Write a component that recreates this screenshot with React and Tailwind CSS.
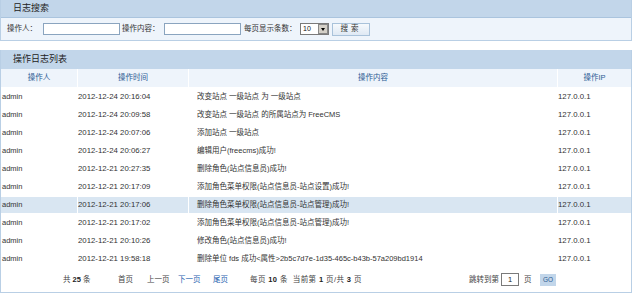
const font = { fontFamily: '"Liberation Sans", "Noto Sans CJK SC", sans-serif' };

const rows = [
  ["admin", "2012-12-24 20:16:04", "改变站点 一级站点 为 一级站点"],
  ["admin", "2012-12-24 20:09:58", "改变站点 一级站点 的所属站点为 FreeCMS"],
  ["admin", "2012-12-24 20:07:06", "添加站点 一级站点"],
  ["admin", "2012-12-24 20:06:27", "编辑用户(freecms)成功!"],
  ["admin", "2012-12-21 20:27:35", "删除角色(站点信息员)成功!"],
  ["admin", "2012-12-21 20:17:09", "添加角色菜单权限(站点信息员-站点设置)成功!"],
  ["admin", "2012-12-21 20:17:06", "删除角色菜单权限(站点信息员-站点管理)成功!"],
  ["admin", "2012-12-21 20:17:02", "添加角色菜单权限(站点信息员-站点管理)成功!"],
  ["admin", "2012-12-21 20:10:26", "修改角色(站点信息员)成功!"],
  ["admin", "2012-12-21 19:58:18", "删除单位 fds 成功<属性>2b5c7d7e-1d35-465c-b43b-57a209bd1914"],
];

const cols = "grid grid-cols-[76px_110px_368px_1fr] gap-x-px";

export default function App() {
  return (
    <div className="w-[633px] h-[296px] bg-white text-[7.5px] text-[#333] overflow-hidden" style={font}>
      {/* search panel */}
      <div className="w-[632px] border border-t-0 border-[#b9cfe5]">
        <div className="h-[18px] bg-[#c2d6ea] border-b border-[#aac4de] pl-[12px] flex items-center text-[9px] text-[#222]">
          日志搜索
        </div>
        <div className="h-[22px] bg-[#eef4fb] flex items-center pl-[6px]">
          <span className="w-[36px]">操作人：</span>
          <span className="w-[77px] h-[12px] bg-white border border-[#8aa4bf]" />
          <span className="ml-[2px] w-[42px]">操作内容：</span>
          <span className="w-[77px] h-[12px] bg-white border border-[#8aa4bf]" />
          <span className="ml-[3px] w-[56px]">每页显示条数：</span>
          <span className="w-[29px] h-[12px] bg-white border border-[#7a7a7a] flex items-center">
            <span className="flex-1 pl-[2px] text-[7px] text-[#111]">10</span>
            <span className="w-[10px] h-[10px] bg-[#d4d0c8] border border-[#888] flex items-center justify-center">
              <span className="w-0 h-0 border-l-[2px] border-r-[2px] border-t-[3px] border-l-transparent border-r-transparent border-t-black" />
            </span>
          </span>
          <span className="ml-[3px] w-[38px] h-[13px] border border-[#a9c2da] bg-gradient-to-b from-[#f6f9fc] to-[#dfe9f4] flex items-center justify-center text-[#333] tracking-[3px]">
            搜索
          </span>
        </div>
      </div>

      {/* list panel */}
      <div className="mt-[9px] w-[632px] border border-t-0 border-[#b9cfe5]">
        <div className="h-[19px] bg-[#c2d6ea] pl-[12px] flex items-center text-[9px] text-[#222]">
          操作日志列表
        </div>
        <div className={`${cols} h-[18px] text-[#2b5b93]`}>
          <div className="bg-[#eef4fb] flex items-center justify-center">操作人</div>
          <div className="bg-[#eef4fb] flex items-center justify-center">操作时间</div>
          <div className="bg-[#eef4fb] flex items-center justify-center">操作内容</div>
          <div className="bg-[#eef4fb] flex items-center justify-center">操作IP</div>
        </div>
        <div className="mt-[2px] flex flex-col gap-y-[2px]">
          {rows.map((r, i) => {
            const bg = i === 6 ? "bg-[#d9e6f2]" : "";
            return (
              <div key={i} className={`${cols} h-[16px]`}>
                <div className={`${bg} flex items-center pl-[1px]`}>{r[0]}</div>
                <div className={`${bg} flex items-center text-[7.8px]`}>{r[1]}</div>
                <div className={`${bg} flex items-center pl-[8px] whitespace-pre`}>{r[2]}</div>
                <div className={`${bg} flex items-center text-[7.8px]`}>127.0.0.1</div>
              </div>
            );
          })}
        </div>
        <div className="h-[25px] flex items-center pl-[62px] text-[#444]">
          <span className="w-[55px]">
            共 <b className="text-[#222]">25</b> 条
          </span>
          <span className="w-[29px]">首页</span>
          <span className="w-[31px]">上一页</span>
          <span className="w-[35px] text-[#1f5fb0]">下一页</span>
          <span className="w-[37px] text-[#1f5fb0]">尾页</span>
          <span className="w-[219px] whitespace-pre tracking-[0.4px]">
            每页 <b className="text-[#222]">10</b> 条  当前第 <b className="text-[#222]">1</b> 页/共 <b className="text-[#222]">3</b> 页
          </span>
          <span className="w-[32px]">跳转到第</span>
          <span className="w-[18px] h-[13px] border border-[#7a7a7a] bg-white flex items-center justify-center text-[#222]">1</span>
          <span className="ml-[5px] w-[16px]">页</span>
          <span className="w-[16px] h-[12px] bg-[#c2d6ea] text-[#2b5b93] text-[6.5px] flex items-center justify-center">GO</span>
        </div>
      </div>
    </div>
  );
}
